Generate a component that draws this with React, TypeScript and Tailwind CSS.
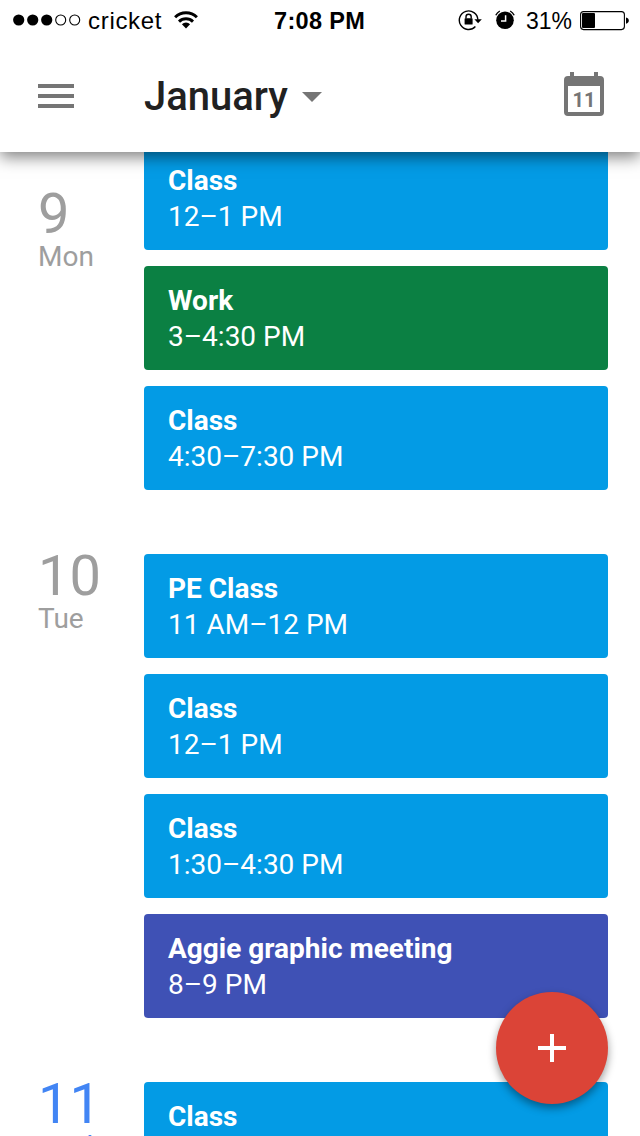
type CalendarEvent = { title: string; time: string; color: string };
type Day = { date: string; name: string; tone: string; offset: string; events: CalendarEvent[] };

const BLUE = 'bg-[#039be5]';
const GREEN = 'bg-[#0b8043]';
const INDIGO = 'bg-[#3f51b5]';

const days: Day[] = [
  {
    date: '9',
    name: 'Mon',
    tone: 'text-[#9e9e9e]',
    offset: 'pt-[46px]',
    events: [
      { title: 'Class', time: '12–1 PM', color: BLUE },
      { title: 'Work', time: '3–4:30 PM', color: GREEN },
      { title: 'Class', time: '4:30–7:30 PM', color: BLUE },
    ],
  },
  {
    date: '10',
    name: 'Tue',
    tone: 'text-[#9e9e9e]',
    offset: 'pt-0',
    events: [
      { title: 'PE Class', time: '11 AM–12 PM', color: BLUE },
      { title: 'Class', time: '12–1 PM', color: BLUE },
      { title: 'Class', time: '1:30–4:30 PM', color: BLUE },
      { title: 'Aggie graphic meeting', time: '8–9 PM', color: INDIGO },
    ],
  },
  {
    date: '11',
    name: 'Wed',
    tone: 'text-[#4285f4]',
    offset: 'pt-0',
    events: [{ title: 'Class', time: '12–1 PM', color: BLUE }],
  },
];

function SignalDots() {
  return (
    <svg width="68" height="14" viewBox="0 0 68 14" className="shrink-0">
      {[0, 1, 2].map((i) => (
        <circle key={i} cx={5.7 + i * 14} cy="7" r="5.6" fill="#000" />
      ))}
      {[3, 4].map((i) => (
        <circle key={i} cx={5.7 + i * 14} cy="7" r="5" fill="none" stroke="#000" strokeWidth="1.1" />
      ))}
    </svg>
  );
}

function WifiIcon() {
  return (
    <svg width="24" height="18" viewBox="0 0 24 18" className="shrink-0" fill="none" stroke="#000" strokeWidth="2.9">
      <path d="M1.1 6.2a15.4 15.4 0 0 1 21.8 0" />
      <path d="M5 10.6a9.9 9.9 0 0 1 14 0" />
      <path d="M12 17.4L7.9 13.3a5.8 5.8 0 0 1 8.2 0z" fill="#000" stroke="none" />
    </svg>
  );
}

function RotationLockIcon() {
  return (
    <svg width="24" height="22" viewBox="0 0 24 22" className="shrink-0">
      <path d="M17.4 17.6A9.3 9.3 0 1 1 19.9 10.8" fill="none" stroke="#000" strokeWidth="1.4" />
      <path d="M16.4 10.3h7.4l-3.7 4z" fill="#000" />
      <rect x="6.6" y="9.3" width="8" height="6.3" rx="0.6" fill="#000" />
      <path d="M8 9.6V7.8a2.6 2.6 0 0 1 5.2 0v1.8" fill="none" stroke="#000" strokeWidth="1.4" />
    </svg>
  );
}

function AlarmIcon() {
  return (
    <svg width="20" height="20" viewBox="0 0 20 20" className="shrink-0">
      <circle cx="10" cy="10.2" r="8.8" fill="#000" />
      <path d="M0.8 5.2A10.4 10.4 0 0 1 4.8 1M15.2 1A10.4 10.4 0 0 1 19.2 5.2" fill="none" stroke="#000" strokeWidth="1.4" />
      <path d="M10.6 5.2v5.9H6" fill="none" stroke="#fff" strokeWidth="1.5" />
    </svg>
  );
}

function BatteryIcon() {
  return (
    <svg width="50" height="20" viewBox="0 0 50 20" className="shrink-0">
      <rect x="0.6" y="0.6" width="43.8" height="18" rx="3" fill="none" stroke="#000" strokeWidth="1.1" />
      <rect x="2" y="2" width="13" height="15" rx="1" fill="#000" />
      <path d="M46 6.4c1.8.4 2.8 1.5 2.8 3.2s-1 2.8-2.8 3.2z" fill="#000" />
    </svg>
  );
}

function StatusBar() {
  return (
    <div className="grid h-10 grid-cols-[274px_1fr_182px] items-center font-['Liberation_Sans',sans-serif] text-2xl leading-10 text-black">
      <div className="flex items-center pl-[13px]">
        <SignalDots />
        <span className="ml-[7px] w-[75px] pt-0.5 leading-[38px] whitespace-nowrap tracking-[0.7px]">cricket</span>
        <span className="ml-[11px]">
          <WifiIcon />
        </span>
      </div>
      <span className="pt-0.5 text-[23.5px] leading-[38px] font-bold tracking-[0.35px] whitespace-nowrap">7:08 PM</span>
      <div className="flex items-center">
        <RotationLockIcon />
        <span className="ml-[13px]">
          <AlarmIcon />
        </span>
        <span className="ml-[11px] w-[46px] pt-0.5 text-[23px] leading-[38px] whitespace-nowrap">31%</span>
        <span className="ml-[8px] pt-px">
          <BatteryIcon />
        </span>
      </div>
    </div>
  );
}

function CalendarIcon() {
  return (
    <span className="relative block h-11 w-10">
      <svg width="40" height="44" viewBox="0 0 40 44">
        <path
          fill="#757575"
          fillRule="evenodd"
          d="M6 0h4v4h20V0h4v4h2a4 4 0 0 1 4 4v32a4 4 0 0 1-4 4H4a4 4 0 0 1-4-4V8a4 4 0 0 1 4-4h2zM4 14v26h32V14z"
        />
      </svg>
      <span className="absolute inset-x-0 top-4 text-center font-[Roboto,sans-serif] text-[20px] leading-6 font-bold text-[#757575]">
        11
      </span>
    </span>
  );
}

function Header() {
  return (
    <header className="relative z-10 h-[152px] shrink-0 bg-white shadow-[0_5px_15px_rgba(0,0,0,0.5)]">
      <StatusBar />
      <div className="flex h-[112px] items-center pr-9 pl-[38px]">
        <button aria-label="Menu" className="flex w-9 flex-col gap-1.5">
          <span className="h-1 bg-[#757575]" />
          <span className="h-1 bg-[#757575]" />
          <span className="h-1 bg-[#757575]" />
        </button>
        <button className="ml-[70px] flex items-center pt-0.5">
          <span className="text-[40px] leading-[48px] font-medium text-[#212121]">January</span>
          <svg width="20" height="10" viewBox="0 0 20 10" className="ml-3.5">
            <path d="M0 0h20L10 10z" fill="#757575" />
          </svg>
        </button>
        <button aria-label="Today" className="-mt-1 ml-auto">
          <CalendarIcon />
        </button>
      </div>
    </header>
  );
}

function EventCard({ title, time, color }: CalendarEvent) {
  return (
    <div className={`h-[104px] rounded-[4px] px-6 pt-[17px] text-[28px] leading-9 text-white ${color}`}>
      <div className="font-bold">{title}</div>
      <div>{time}</div>
    </div>
  );
}

export default function App() {
  return (
    <div className="relative flex h-[1136px] w-[640px] flex-col overflow-hidden bg-white font-[Roboto,sans-serif]">
      <Header />
      <main className="-mt-1.5 flex flex-col gap-16">
        {days.map((day) => (
          <section key={day.date} className="grid grid-cols-[106px_1fr] pr-8 pl-[38px]">
            <div className={`${day.offset} ${day.tone}`}>
              <div className="text-[56px] leading-[44px]">{day.date}</div>
              <div className="text-[28px] leading-[42px]">{day.name}</div>
            </div>
            <div className="flex flex-col gap-4">
              {day.events.map((event, i) => (
                <EventCard key={i} {...event} />
              ))}
            </div>
          </section>
        ))}
      </main>
      <button
        aria-label="Create event"
        className="absolute right-8 bottom-8 flex size-28 items-center justify-center rounded-full bg-[#db4437] shadow-[0_4px_8px_rgba(0,0,0,0.4)]"
      >
        <svg width="28" height="28" viewBox="0 0 28 28">
          <path d="M12 0h4v12h12v4H16v12h-4V16H0v-4h12z" fill="#fff" />
        </svg>
      </button>
    </div>
  );
}
